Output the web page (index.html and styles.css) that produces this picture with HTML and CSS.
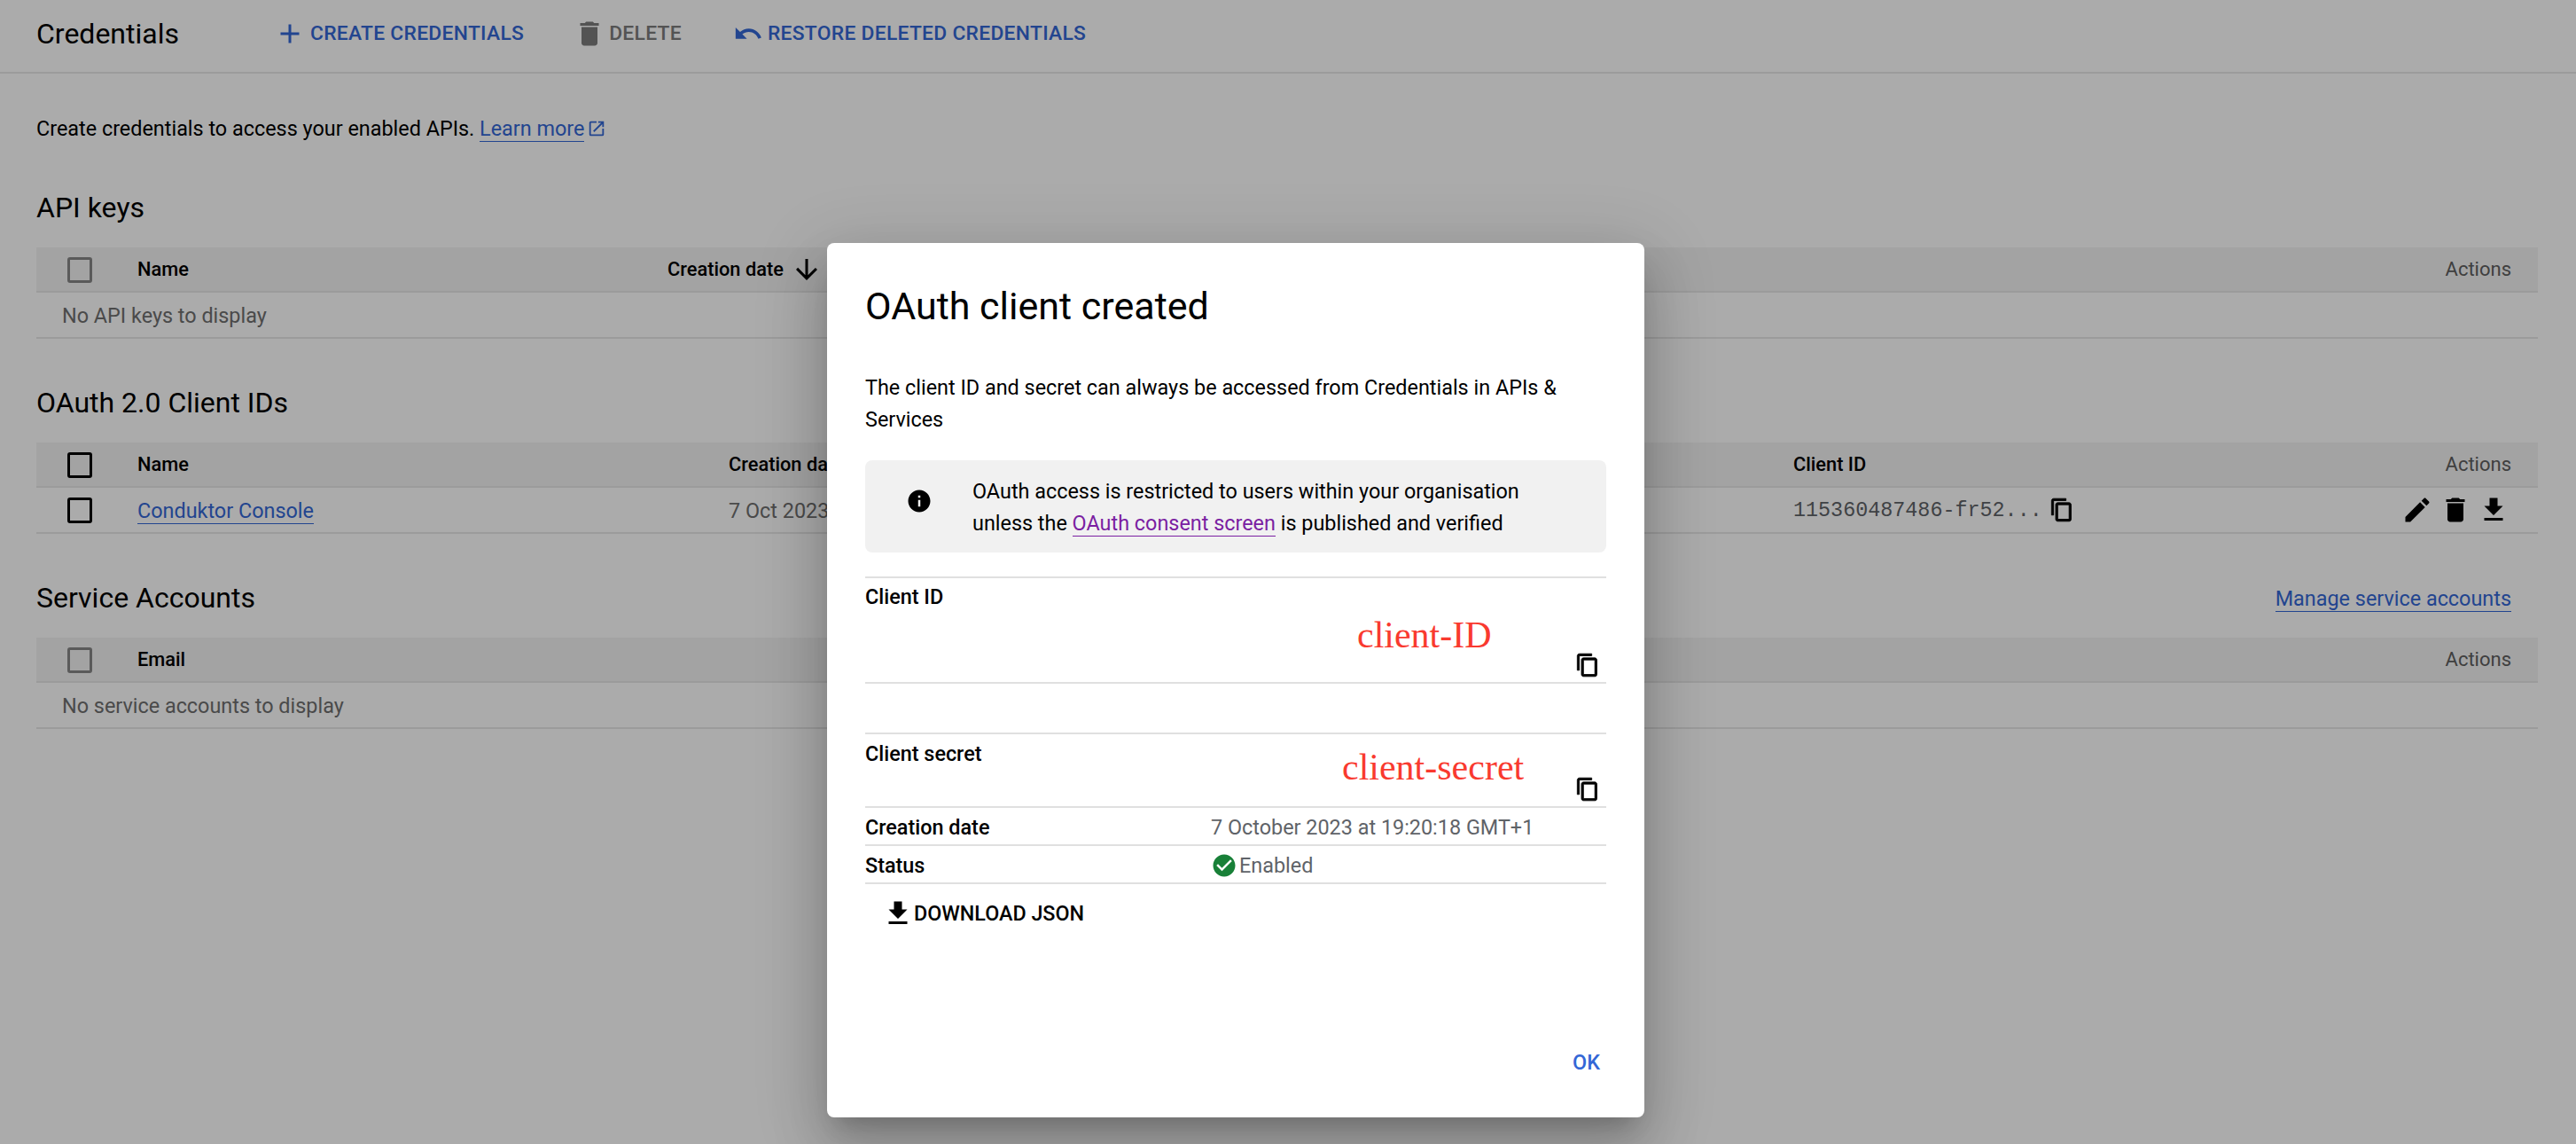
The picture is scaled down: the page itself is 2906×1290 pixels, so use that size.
FILE: index.html
```html
<!DOCTYPE html>
<html lang="en">
<head>
<meta charset="utf-8">
<title>Credentials</title>
<link rel="stylesheet" href="styles.css">
</head>
<body>
<div class="page">
  <header class="toolbar">
    <h1 class="page-title">Credentials</h1>
    <a class="tool tool-create"><svg class="ic36" viewBox="0 0 24 24"><path d="M19 13h-6v6h-2v-6H5v-2h6V5h2v6h6v2z"/></svg>CREATE CREDENTIALS</a>
    <a class="tool tool-delete"><svg class="ic36" viewBox="0 0 24 24"><path d="M6 19c0 1.1.9 2 2 2h8c1.1 0 2-.9 2-2V7H6v12zM19 4h-3.5l-1-1h-5l-1 1H5v2h14V4z"/></svg>DELETE</a>
    <a class="tool tool-restore"><svg class="ic34" viewBox="0 0 24 24"><path d="M12.5 8c-2.65 0-5.05.99-6.9 2.6L2 7v9h9l-3.62-3.62c1.39-1.16 3.16-1.88 5.12-1.88 3.54 0 6.55 2.31 7.6 5.5l2.37-.78C21.08 11.03 17.15 8 12.5 8z"/></svg>RESTORE DELETED CREDENTIALS</a>
  </header>
  <main class="content">
    <p class="intro">Create credentials to access your enabled APIs. <a class="link">Learn more</a><svg class="ext" viewBox="0 0 24 24"><path d="M19 19H5V5h7V3H5a2 2 0 0 0-2 2v14a2 2 0 0 0 2 2h14a2 2 0 0 0 2-2v-7h-2v7zM14 3v2h3.59l-9.83 9.83 1.41 1.41L19 6.41V10h2V3h-7z"/></svg></p>

    <section class="section">
      <div class="section-head"><h2>API keys</h2></div>
      <div class="row row-head">
        <span class="check check-off"></span>
        <span class="col-a">Name</span>
        <span class="col-date-1">Creation date<svg class="ic36 arrow" viewBox="0 0 24 24"><path d="M20 12l-1.41-1.41L13 16.17V4h-2v12.17l-5.58-5.59L4 12l8 8 8-8z"/></svg></span>
        <span class="actions-head">Actions</span>
      </div>
      <div class="row row-empty">No API keys to display</div>
    </section>

    <section class="section">
      <div class="section-head"><h2>OAuth 2.0 Client IDs</h2></div>
      <div class="row row-head">
        <span class="check"></span>
        <span class="col-a col-a-wide">Name</span>
        <span class="col-date-2">Creation date</span>
        <span class="col-id">Client ID</span>
        <span class="actions-head">Actions</span>
      </div>
      <div class="row row-data">
        <span class="check"></span>
        <span class="col-a col-a-wide"><a class="link">Conduktor Console</a></span>
        <span class="col-date-2 page-muted">7 Oct 2023</span>
        <span class="col-id id-cell"><span class="mono">115360487486-fr52...</span><svg class="ic28 copy" viewBox="0 0 24 24"><use href="#copy"/></svg></span>
        <span class="row-actions">
          <svg class="ic36" viewBox="0 0 24 24"><path d="M3 17.25V21h3.75L17.81 9.94l-3.75-3.75L3 17.25zM20.71 7.04c.39-.39.39-1.02 0-1.41l-2.34-2.34c-.39-.39-1.02-.39-1.41 0l-1.83 1.83 3.75 3.75 1.83-1.83z"/></svg>
          <svg class="ic36" viewBox="0 0 24 24"><path d="M6 19c0 1.1.9 2 2 2h8c1.1 0 2-.9 2-2V7H6v12zM19 4h-3.5l-1-1h-5l-1 1H5v2h14V4z"/></svg>
          <svg class="ic36" viewBox="0 0 24 24"><use href="#down"/></svg>
        </span>
      </div>
    </section>

    <section class="section">
      <div class="section-head"><h2>Service Accounts</h2><a class="link manage">Manage service accounts</a></div>
      <div class="row row-head">
        <span class="check check-off"></span>
        <span class="col-a">Email</span>
        <span class="actions-head">Actions</span>
      </div>
      <div class="row row-empty">No service accounts to display</div>
    </section>
  </main>
</div>

<div class="overlay">
  <div class="modal">
    <h2 class="modal-title">OAuth client created</h2>
    <p class="modal-text">The client ID and secret can always be accessed from Credentials in APIs &amp; Services</p>
    <div class="notice">
      <svg class="ic30 info" viewBox="0 0 24 24"><path d="M12 2C6.48 2 2 6.48 2 12s4.48 10 10 10 10-4.48 10-10S17.52 2 12 2zm1 15h-2v-6h2v6zm0-8h-2V7h2v2z"/></svg>
      <p class="notice-text">OAuth access is restricted to users within your organisation<br>unless the <a class="link-visited">OAuth consent screen</a> is published and verified</p>
    </div>
    <div class="secret-row secret-id">
      <span class="key">Client ID</span>
      <svg class="ic28 copy" viewBox="0 0 24 24"><use href="#copy"/></svg>
      <span class="mark mark-id">client-ID</span>
    </div>
    <div class="secret-row secret-secret">
      <span class="key">Client secret</span>
      <svg class="ic28 copy" viewBox="0 0 24 24"><use href="#copy"/></svg>
      <span class="mark mark-secret">client-secret</span>
    </div>
    <div class="info-row">
      <span class="key">Creation date</span>
      <span class="muted">7 October 2023 at 19:20:18 GMT+1</span>
    </div>
    <div class="info-row">
      <span class="key">Status</span>
      <span class="muted status"><svg class="ic30 ok-icon" viewBox="0 0 24 24"><circle cx="12" cy="12" r="7" fill="#fff"/><path d="M12 2C6.48 2 2 6.48 2 12s4.48 10 10 10 10-4.48 10-10S17.52 2 12 2zm-2 15l-5-5 1.41-1.41L10 14.17l7.59-7.59L19 8l-9 9z"/></svg>Enabled</span>
    </div>
    <a class="download"><svg class="ic36" viewBox="0 0 24 24"><use href="#down"/></svg>DOWNLOAD JSON</a>
    <div class="modal-foot"><a class="ok">OK</a></div>
  </div>
</div>

<svg class="defs" width="0" height="0">
  <symbol id="copy" viewBox="0 0 24 24"><path d="M16 1H4c-1.1 0-2 .9-2 2v14h2V3h12V1zm3 4H8c-1.1 0-2 .9-2 2v14c0 1.1.9 2 2 2h11c1.1 0 2-.9 2-2V7c0-1.1-.9-2-2-2zm0 16H8V7h11v14z"/></symbol>
  <symbol id="down" viewBox="0 0 24 24"><path d="M19 9h-4V3H9v6H5l7 7 7-7zM5 18v2h14v-2H5z"/></symbol>
</svg>
</body>
</html>
```
FILE: styles.css
```css
* { box-sizing: border-box; }
html, body { margin: 0; height: 100%; overflow: hidden; }
body { font-family: Roboto, "Liberation Sans", sans-serif; font-size: 23.4px; line-height: 36px; color: #000; background: #fff; }
h1, h2, p { margin: 0; font-weight: 400; }
svg { fill: currentColor; flex: none; display: block; }
.defs { position: absolute; }
.ic28 { width: 28px; height: 28px; }
.ic30 { width: 30px; height: 30px; }
.ic34 { width: 34px; height: 34px; }
.ic36 { width: 36px; height: 36px; }
.copy { stroke: currentColor; stroke-width: .7; }

.page { width: 2906px; height: 1290px; }
.toolbar { display: flex; align-items: center; height: 83px; padding: 0 0 6px 41px; border-bottom: 2px solid #e8e8e8; }
.page-title { font-size: 32px; line-height: 40px; width: 268px; }
.tool { display: flex; align-items: center; font-weight: 500; font-size: 22.8px; color: #3367d6; letter-spacing: .3px; }
.tool-create svg { margin-right: 5px; }
.tool-delete { margin-left: 56px; color: #7c7c7c; }
.tool-delete svg { margin-right: 4px; }
.tool-restore { margin-left: 58px; }
.tool-restore svg { margin-right: 5px; }

.content { padding: 0 43px 0 41px; }
.intro { margin-top: 44px; height: 36px; white-space: pre; }
.link { color: #3367d6; border-bottom: 1.5px solid #3367d6; }
.ext { display: inline-block; vertical-align: -3px; width: 22px; height: 22px; color: #3367d6; margin-left: 3px; }
.section { margin-top: 51px; }
.section + .section { margin-top: 52px; }
.section-head { display: flex; justify-content: space-between; align-items: center; height: 40px; margin-bottom: 25px; }
.section-head h2 { font-size: 32px; line-height: 40px; }
.manage { margin-right: 30px; margin-top: 3px; line-height: 28px; }

.row { display: flex; align-items: center; height: 52px; border-bottom: 2px solid #e8e8e8; }
.row-head { height: 51px; background: #f3f3f3; font-weight: 500; font-size: 21.8px; }
.row-head .check { margin-top: 2px; }
.row-empty { padding: 2px 0 0 29px; color: #6f6f6f; }
.check { width: 28px; height: 29px; margin-left: 35px; border: 3px solid #000; border-radius: 3px; flex: none; }
.check-off { border-color: #868686; }
.col-a { margin-left: 51px; width: 598px; flex: none; }
.col-a-wide { width: 667px; }
.col-date-1 { display: flex; align-items: center; gap: 8px; }
.arrow { margin-top: 1px; }
.col-date-2 { width: 1201px; flex: none; }
.col-id { flex: none; }
.id-cell { display: flex; align-items: center; }
.row-data .col-a, .row-data .col-date-2, .row-data .mono { padding-top: 2px; }
.mono { font-family: "Liberation Mono", "DejaVu Sans Mono", monospace; font-size: 23.4px; color: #5f6368; margin-right: 8px; }
.actions-head { margin-left: auto; margin-right: 30px; font-weight: 400; font-size: 22px; color: #5f5f5f; }
.row-actions { display: flex; gap: 7px; margin-left: auto; margin-right: 32px; }
.muted { color: #5f6368; }
.page-muted { color: #6f6f6f; }

.overlay { position: absolute; inset: 0; background: rgba(0, 0, 0, .33); }
.modal { position: absolute; left: 933px; top: 274px; width: 922px; height: 986px; padding: 46px 43px 0; background: #fff; border-radius: 8px; box-shadow: 0 18px 25px -12px rgba(0,0,0,.2), 0 40px 63px 5px rgba(0,0,0,.14), 0 15px 77px 13px rgba(0,0,0,.12); }
.modal-title { font-size: 43px; line-height: 50px; }
.modal-text { margin-top: 49px; }
.notice { display: flex; align-items: flex-start; margin-top: 28px; height: 104px; padding: 17px 0 0 46px; background: #f1f1f1; border-radius: 8px; }
.info { margin-top: 14px; margin-right: 45px; }
.link-visited { color: #7b1fa2; border-bottom: 1.5px solid #7b1fa2; }
.secret-row { position: relative; display: flex; justify-content: space-between; align-items: flex-end; border-top: 2px solid #e0e0e0; border-bottom: 2px solid #e0e0e0; padding-right: 7px; padding-bottom: 5px; }
.secret-row .key { align-self: flex-start; }
.secret-id { height: 121px; margin-top: 27px; padding-top: 3px; }
.secret-secret { height: 83px; margin-top: 55px; padding-top: 4px; border-bottom: 0; }
.key { font-weight: 500; font-size: 23.4px; }
.mark { position: absolute; font-family: "Liberation Serif", serif; font-size: 42px; line-height: 50px; color: #f93a2f; }
.mark-id { left: 555px; top: 39px; }
.mark-secret { left: 538px; top: 12px; }
.info-row { display: grid; grid-template-columns: 390px 1fr; align-items: center; height: 43px; padding-top: 2px; border-top: 2px solid #e0e0e0; }
.info-row + .download { border-top: 2px solid #e0e0e0; }
.status { display: flex; align-items: center; gap: 2px; }
.ok-icon { color: #188038; }
.download { display: flex; align-items: center; font-weight: 500; padding: 15px 0 0 19px; font-size: 23.3px; }
.modal-foot { display: flex; justify-content: flex-end; margin-top: 132px; padding-right: 7px; }
.ok { color: #3367d6; font-weight: 500; }
```
